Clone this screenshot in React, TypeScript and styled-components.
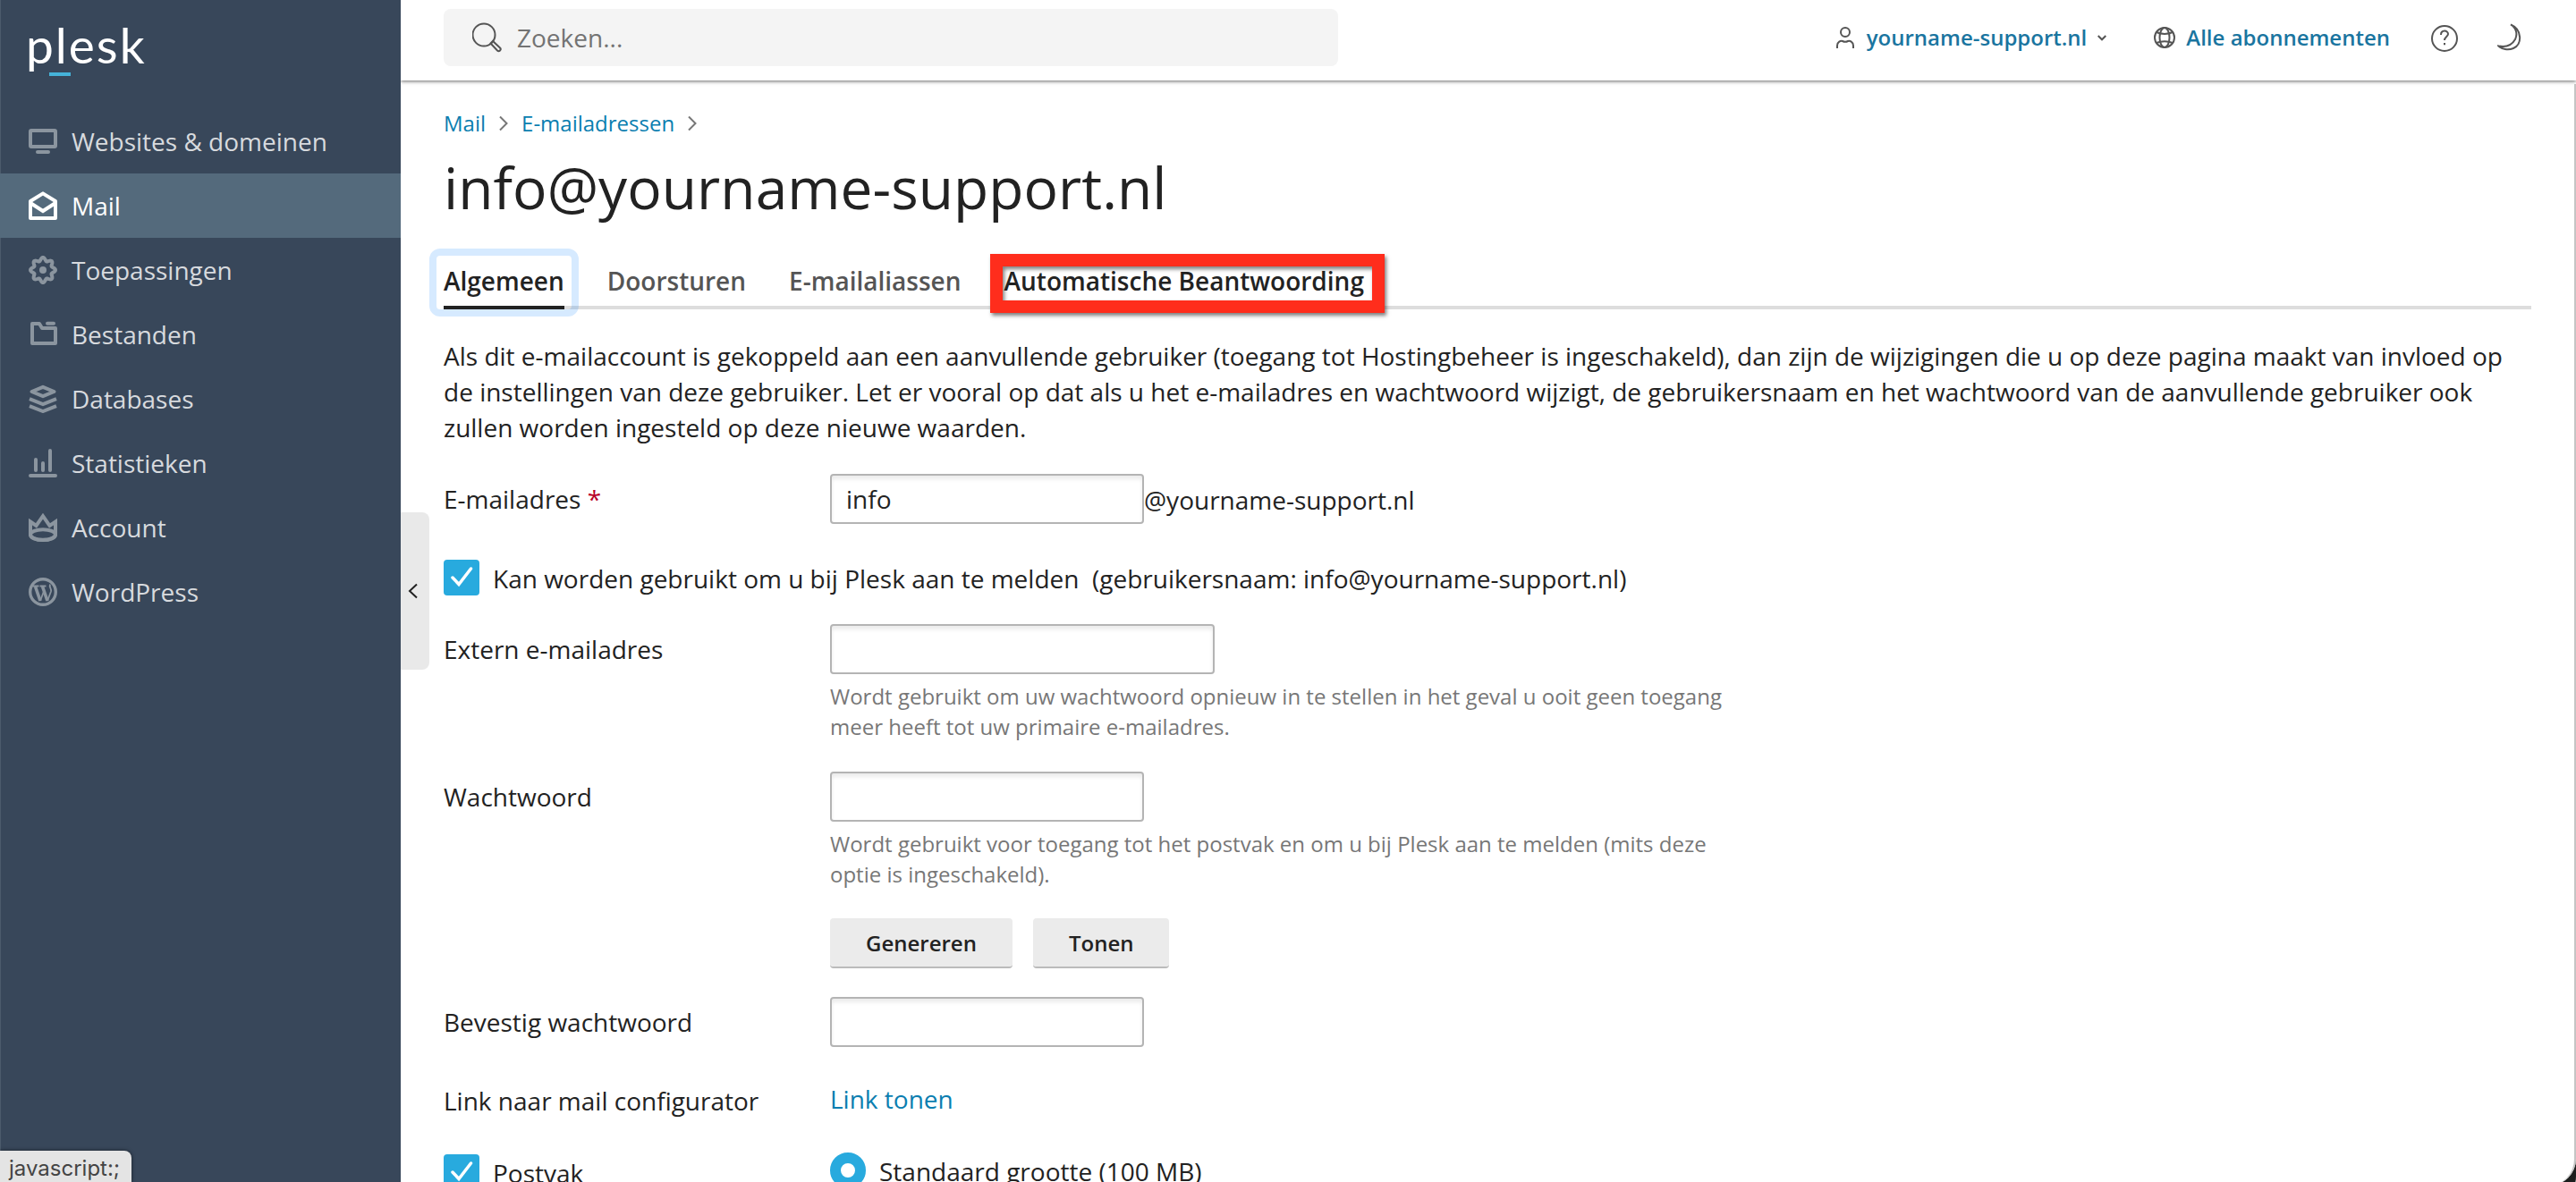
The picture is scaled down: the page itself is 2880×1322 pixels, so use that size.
import styled, { createGlobalStyle } from "styled-components";

interface NavItem {
  label: string;
  icon: React.ReactNode;
}

// wavy outline with eight rounded teeth
function getGearPath() {
  const points: string[] = [];
  for (let i = 0; i < 96; i++) {
    const angle = (i / 96) * Math.PI * 2;
    const radius = 12.2 + 1.8 * Math.cos(angle * 8);
    const x = 16 + radius * Math.cos(angle);
    const y = 16 + radius * Math.sin(angle);
    points.push(`${x.toFixed(2)} ${y.toFixed(2)}`);
  }
  return `M${points.join(`L`)}z`;
}

const navItems: NavItem[] = [
  {
    label: `Websites & domeinen`,
    icon: (
      <>
        <rect x="2" y="4" width="28" height="18" rx="1" />
        <path d="M10 28h12" strokeLinecap="round" />
      </>
    ),
  },
  {
    label: `Mail`,
    icon: (
      <>
        <path d="M2 11L16 2.400 30 11v19H2z" strokeLinejoin="round" />
        <path d="M2 13l14 9 14-9" />
      </>
    ),
  },
  {
    label: `Toepassingen`,
    icon: (
      <>
        <path d={getGearPath()} strokeLinejoin="round" />
        <circle cx="16" cy="16" r="4" fill="currentColor" stroke="none" />
      </>
    ),
  },
  {
    label: `Bestanden`,
    icon: (
      <>
        <path d="M4 4h8l3 5h15v17H4z" strokeLinejoin="round" />
        <path d="M21 3.800h7" strokeLinecap="round" />
      </>
    ),
  },
  {
    label: `Databases`,
    icon: (
      <>
        <path d="M3.500 8L16 2.800 28.500 8 16 13.200z" strokeLinejoin="round" />
        <path d="M1 16.200l15 5.800 15-5.800M1 24.200L16 30l15-5.800" />
      </>
    ),
  },
  {
    label: `Statistieken`,
    icon: (
      <path d="M2 30h28M8 12v12M16 16v8M24 2v22" strokeLinecap="round" />
    ),
  },
  {
    label: `Account`,
    icon: (
      <>
        <path d="M2 9.500l6.500 4.500L16 3.200 23.500 14 30 9.500V24c0 3.500-6 6-14 6S2 27.500 2 24z" />
        <ellipse cx="16" cy="24" rx="14" ry="5.800" />
      </>
    ),
  },
  {
    label: `WordPress`,
    icon: (
      <>
        <circle cx="16" cy="16" r="14.300" strokeWidth="3.400" />
        <path d="M7.500 10L13 26M15.500 10L21 26" strokeWidth="3.600" />
        <path
          d="M13 26l4.500-12M21 26l4-10.500c1-3-2.500-4.500-1-8M4.500 9.500h7M12.500 9.500h7"
          strokeWidth="1.800"
        />
      </>
    ),
  },
];

const tabs = [`Algemeen`, `Doorsturen`, `E-mailaliassen`];

function Check() {
  return (
    <Checkbox>
      <svg width="40" height="40" viewBox="0 0 40 40" fill="none">
        <path
          d="M10 20l7 7.500L30.500 10"
          stroke="#fff"
          strokeWidth="3.500"
          strokeLinecap="round"
        />
      </svg>
    </Checkbox>
  );
}

function Sidebar() {
  return (
    <Side>
      <Logo>
        plesk
        <LogoBar />
      </Logo>
      <nav>
        {navItems.map((item) => (
          <NavLink key={item.label} $active={item.label === `Mail`}>
            <svg
              width="32"
              height="32"
              viewBox="0 0 32 32"
              fill="none"
              stroke="currentColor"
              strokeWidth="4"
            >
              {item.icon}
            </svg>
            <span>{item.label}</span>
          </NavLink>
        ))}
      </nav>
      <Collapse>
        <svg width="12" height="18" viewBox="0 0 12 18" fill="none">
          <path d="M10 1.500L2 9l8 7.500" stroke="#222" strokeWidth="2" />
        </svg>
      </Collapse>
      <StatusBar>javascript:;</StatusBar>
    </Side>
  );
}

function TopBar() {
  return (
    <Header>
      <Search>
        <LineIcon width="34" height="34" viewBox="1 0 34 34">
          <circle cx="14" cy="14" r="12.500" />
          <path d="M21.500 23.500l2.500-2.500 8 7.500c2 2-1 5-3 3z" />
        </LineIcon>
        <span>Zoeken...</span>
      </Search>
      <Tools>
        <Tool $space={9}>
          <LineIcon width="22" height="24" viewBox="0 0 22 24">
            <circle cx="10" cy="6" r="5" />
            <path d="M1 24v-3c0-4 4-6 6-5 2 1 4 1 6 0 2-1 6 1 6 5v3" />
          </LineIcon>
          <span>yourname-support.nl</span>
          <LineIcon width="10" height="8" viewBox="0 0 10 8">
            <path d="M.7 2L5 6.300 9.300 2" />
          </LineIcon>
        </Tool>
        <Tool $space={2}>
          <LineIcon width="24" height="24" viewBox="0 0 24 24">
            <circle cx="12" cy="12" r="11" />
            <ellipse cx="12" cy="12" rx="5.500" ry="11" />
            <path d="M3 6c5 2.500 13 2.500 18 0M3 18c5-2.500 13-2.500 18 0" />
          </LineIcon>
          <span>Alle abonnementen</span>
        </Tool>
        <LineIcon width="30" height="32" viewBox="0 -2 30 32">
          <circle cx="15" cy="15" r="14" />
          <path d="M11 11c0-6 8-5.500 8-1 0 3-4 3-4 7M15 20v2.300" />
        </LineIcon>
        <LineIcon width="28" height="32" viewBox="0 0 28 32">
          <path d="M15 1.500C28 7 28 24 18 28 12 30.500 5 29 1.500 25.500 9 27 16 25 20 18 23 12 21 5 15 1.500z" />
        </LineIcon>
      </Tools>
    </Header>
  );
}

function Chevron() {
  return (
    <svg width="12" height="18" viewBox="0 0 12 18" fill="none">
      <path d="M2 1.500L9.500 9 2 16.500" stroke="#777" strokeWidth="2" />
    </svg>
  );
}

function App() {
  return (
    <Page>
      <GlobalStyle />
      <Sidebar />
      <Main>
        <TopBar />
        <Content>
          <Breadcrumbs>
            <a>Mail</a>
            <Chevron />
            <a>E-mailadressen</a>
            <Chevron />
          </Breadcrumbs>
          <Title>info@yourname-support.nl</Title>
          <Tabs>
            {tabs.map((tab) => (
              <Tab key={tab} $active={tab === `Algemeen`}>
                {tab}
              </Tab>
            ))}
            <MarkedTab>Automatische Beantwoording</MarkedTab>
          </Tabs>
          <Intro>
            Als dit e-mailaccount is gekoppeld aan een aanvullende gebruiker
            (toegang tot Hostingbeheer is ingeschakeld), dan zijn de wijzigingen
            die u op deze pagina maakt van invloed op
            <br />
            de instellingen van deze gebruiker. Let er vooral op dat als u het
            e-mailadres en wachtwoord wijzigt, de gebruikersnaam en het
            wachtwoord van de aanvullende gebruiker ook
            <br />
            zullen worden ingesteld op deze nieuwe waarden.
          </Intro>
          <Row $height={88}>
            <Label>
              E-mailadres <Required>*</Required>
            </Label>
            <Inline>
              <Input $width={351} defaultValue="info" />
              <Domain>@yourname-support.nl</Domain>
            </Inline>
          </Row>
          <CheckRow>
            <Check />
            <span>
              Kan worden gebruikt om u bij Plesk aan te melden&nbsp;
              (gebruikersnaam: info@yourname-support.nl)
            </span>
          </CheckRow>
          <Row $height={165}>
            <Label>Extern e-mailadres</Label>
            <div>
              <Input $width={430} />
              <Hint>
                Wordt gebruikt om uw wachtwoord opnieuw in te stellen in het
                geval u ooit geen toegang
                <br />
                meer heeft tot uw primaire e-mailadres.
              </Hint>
            </div>
          </Row>
          <Row $height={252}>
            <Label>Wachtwoord</Label>
            <div>
              <Input $width={351} />
              <Hint>
                Wordt gebruikt voor toegang tot het postvak en om u bij Plesk
                aan te melden (mits deze
                <br />
                optie is ingeschakeld).
              </Hint>
              <Buttons>
                <Button>Genereren</Button>
                <Button>Tonen</Button>
              </Buttons>
            </div>
          </Row>
          <Row $height={88}>
            <Label>Bevestig wachtwoord</Label>
            <Input $width={351} />
          </Row>
          <Row $height={86}>
            <Label>Link naar mail configurator</Label>
            <TextLink>Link tonen</TextLink>
          </Row>
          <Row $height={60}>
            <MailboxLabel>
              <Check />
              <span>Postvak</span>
            </MailboxLabel>
            <Option>
              <Radio />
              <span>Standaard grootte (100 MB)</span>
            </Option>
          </Row>
        </Content>
        <WindowCorner />
      </Main>
    </Page>
  );
}

export default App;

const GlobalStyle = createGlobalStyle`
  *, *::before, *::after {
    box-sizing: border-box;
  }

  body {
    margin: 0;
    overflow: hidden;
    background: #fff;
    color: #222;
    font-family: "Open Sans", sans-serif;
    font-size: 28px;
    line-height: 40px;
  }

  svg {
    display: block;
    flex: none;
  }
`;

const Page = styled.div`
  display: flex;
  width: 2880px;
  height: 1322px;
  overflow: hidden;
`;

const LineIcon = styled.svg`
  fill: none;
  stroke: #555;
  stroke-width: 2;
`;

const Side = styled.aside`
  position: relative;
  z-index: 1;
  flex: none;
  width: 448px;
  height: 100%;
  background: #38475a;
  box-shadow: inset 1px 0 #4c5b6c;
`;

const Logo = styled.div`
  position: relative;
  height: 122px;
  padding: 12px 0 0 29px;
  color: #fff;
  font-family: Lato, sans-serif;
  font-size: 55px;
  line-height: 76px;
  letter-spacing: 2px;
`;

const LogoBar = styled.i`
  position: absolute;
  left: 55px;
  top: 81px;
  width: 24px;
  height: 4px;
  background: #45b3d9;
`;

const NavLink = styled.a<{ $active: boolean }>`
  display: flex;
  align-items: center;
  gap: 16px;
  height: 72px;
  padding-left: 32px;
  background: ${(p) => (p.$active ? `#546a7c` : `transparent`)};
  color: ${(p) => (p.$active ? `#fff` : `#d7dade`)};

  & svg {
    color: ${(p) => (p.$active ? `#fff` : `#8b959f`)};
  }
`;

const Collapse = styled.div`
  position: absolute;
  left: 448px;
  top: 573px;
  display: flex;
  align-items: center;
  width: 32px;
  height: 176px;
  padding-left: 8px;
  border-radius: 0 8px 8px 0;
  background: #e9e9e9;
`;

const StatusBar = styled.div`
  position: absolute;
  left: 0;
  bottom: 0;
  width: 147px;
  height: 35px;
  padding-left: 10px;
  border-radius: 0 8px 0 0;
  background: #e4e4e4;
  box-shadow: 0 0 4px rgba(0, 0, 0, 0.6);
  color: #444;
  font-family: Inter, sans-serif;
  font-size: 24px;
  line-height: 40px;
`;

const Main = styled.main`
  position: relative;
  flex: 1;
  min-width: 0;
`;

const Header = styled.header`
  display: flex;
  justify-content: space-between;
  height: 90px;
  padding: 10px 60px 16px 48px;
  box-shadow: 0 1px 4px rgba(0, 0, 0, 0.6);
`;

const Search = styled.div`
  display: flex;
  align-items: center;
  gap: 16px;
  width: 1000px;
  height: 64px;
  padding-left: 32px;
  border-radius: 8px;
  background: #f4f4f4;
  color: #737373;
`;

const Tools = styled.div`
  display: flex;
  align-items: center;
  gap: 44px;
  height: 64px;
`;

const Tool = styled.a<{ $space: number }>`
  display: flex;
  align-items: center;
  gap: 12px;
  margin-right: ${(p) => p.$space}px;
  color: #1a75a0;
  font-size: 24px;
  font-weight: 600;
`;

const Content = styled.div`
  padding: 28px 50px 0 48px;
`;

const Breadcrumbs = styled.div`
  display: flex;
  align-items: center;
  gap: 14px;
  height: 40px;
  color: #0a7eb0;
  font-size: 24px;
`;

const Title = styled.h1`
  height: 96px;
  margin: 4px 0 26px;
  font-size: 64px;
  font-weight: 400;
  line-height: 96px;
  letter-spacing: 0.06px;
`;

const Tabs = styled.div`
  display: flex;
  gap: 48px;
  height: 62px;
  border-bottom: 4px solid #ddd;
  font-weight: 600;
  line-height: 60px;
`;

const Tab = styled.a<{ $active: boolean }>`
  position: relative;
  height: 62px;
  color: ${(p) => (p.$active ? `#222` : `#555`)};
  border-bottom: ${(p) => (p.$active ? `4px solid #222` : `none`)};

  &::after {
    content: "";
    display: ${(p) => (p.$active ? `block` : `none`)};
    position: absolute;
    inset: -6px -16px -12px;
    border: 8px solid rgba(0, 125, 255, 0.16);
    border-radius: 12px;
  }
`;

const MarkedTab = styled.a`
  position: relative;
  height: 62px;

  &::after {
    content: "";
    position: absolute;
    left: -16px;
    top: 0;
    width: 441px;
    height: 66px;
    border: 14px solid #ff2d1c;
    box-shadow: 2px 3px 4px rgba(0, 0, 0, 0.5),
      inset 2px 3px 4px rgba(0, 0, 0, 0.5);
  }
`;

const Intro = styled.p`
  margin: 32px 0;
  white-space: nowrap;
`;

const Row = styled.div<{ $height: number }>`
  display: flex;
  align-items: flex-start;
  height: ${(p) => p.$height}px;
`;

const Label = styled.label`
  flex: none;
  width: 432px;
  padding-top: 8px;
`;

const Required = styled.span`
  color: #b8002a;
`;

const Inline = styled.div`
  display: flex;
`;

const Domain = styled.span`
  padding-top: 9px;
`;

const Input = styled.input<{ $width: number }>`
  display: block;
  width: ${(p) => p.$width}px;
  height: 56px;
  padding: 0 16px;
  border: 2px solid #b4b4b4;
  border-radius: 4px;
  background: #fff;
  box-shadow: inset 0 4px 4px #ececec;
  color: #222;
  font: inherit;
`;

const CheckRow = styled.div`
  display: flex;
  gap: 15px;
  height: 80px;
  padding-top: 8px;
  line-height: 42px;
`;

const Checkbox = styled.span`
  flex: none;
  width: 40px;
  height: 40px;
  border-radius: 4px;
  background: #28aade;
`;

const Hint = styled.p`
  margin: 8px 0 0;
  color: #777;
  font-size: 24px;
  line-height: 34px;
  white-space: nowrap;
`;

const Buttons = styled.div`
  display: flex;
  gap: 23px;
  margin-top: 32px;
`;

const Button = styled.button`
  height: 56px;
  padding: 0 40px;
  border: 0;
  border-bottom: 2px solid #bbb;
  border-radius: 4px;
  background: #ebebeb;
  color: #222;
  font: 600 24px "Open Sans", sans-serif;
`;

const TextLink = styled.a`
  padding-top: 6px;
  color: #0a7eb0;
`;

const MailboxLabel = styled.label`
  display: flex;
  gap: 15px;
  width: 432px;
  padding-top: 2px;
  line-height: 42px;
`;

const Option = styled.label`
  display: flex;
  gap: 15px;
  line-height: 43px;
`;

const Radio = styled.span`
  width: 40px;
  height: 40px;
  border: 12px solid #28aade;
  border-radius: 50%;
  background: #fff;
`;

const WindowCorner = styled.div`
  position: absolute;
  right: 0;
  top: 94px;
  bottom: -4px;
  width: 60px;
  border-right: 2px solid #c4c4c4;
  border-bottom-right-radius: 30px;
  box-shadow: 0 20px 0 #1c1e1d;
  clip-path: inset(0);
`;
